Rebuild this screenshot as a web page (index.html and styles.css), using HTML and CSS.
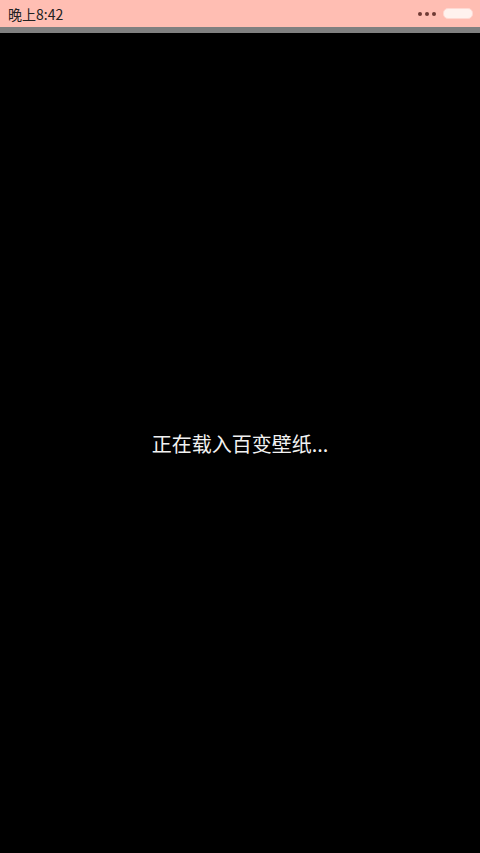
FILE: index.html
```html
<!DOCTYPE html>
<html lang="zh-CN">
<head>
    <meta charset="UTF-8" />
    <meta name="viewport" content="width=device-width, initial-scale=1.0" />
    <title>百变壁纸</title>
    <link rel="stylesheet" href="styles.css">
</head>
<body>
    <div class="status-bar">
        <span class="time">晚上8:42</span>
        <div class="status-right">
            <div class="dots">
                <span></span><span></span><span></span>
            </div>
            <div class="battery"></div>
        </div>
    </div>
    <div class="divider"></div>

    <div class="loading">
        <span>正在载入百变壁纸...</span>
    </div>
</body>
</html>
```

FILE: styles.css
```css
html, body {
    margin: 0;
    padding: 0;
    height: 100%;
}

body {
    background: #000;
    font-family: "Noto Sans CJK SC", "Noto Sans", sans-serif;
    display: flex;
    flex-direction: column;
}

.status-bar {
    height: 27px;
    background: #ffbeb3;
    display: flex;
    align-items: center;
    justify-content: space-between;
    padding: 0 7px 0 8px;
    box-sizing: border-box;
}

.time {
    font-size: 14px;
    color: #222;
}

.status-right {
    display: flex;
    align-items: center;
    gap: 7px;
}

.dots {
    display: flex;
    gap: 3px;
}

.dots span {
    width: 4px;
    height: 4px;
    border-radius: 50%;
    background: #6e3a34;
}

.battery {
    width: 28px;
    height: 9px;
    border-radius: 5px;
    background: #fff2ee;
    border: 1px solid #ffd9d2;
}

.divider {
    height: 6px;
    background: #808080;
}

.loading {
    flex: 1;
    display: flex;
    align-items: center;
    justify-content: center;
}

.loading span {
    color: #f2f2f2;
    font-size: 20px;
}
```
